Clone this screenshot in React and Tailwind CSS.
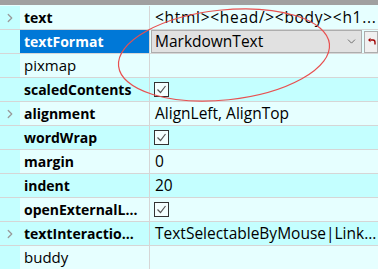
import { ChevronRight, ChevronDown } from 'lucide-react'

const rows = [
  { name: 'text', bold: true, expand: true, value: '<html><head/><body><h1...', wide: true },
  { name: 'textFormat', bold: true, selected: true, combo: 'MarkdownText' },
  { name: 'pixmap', value: '' },
  { name: 'scaledContents', bold: true, check: true },
  { name: 'alignment', bold: true, expand: true, value: 'AlignLeft, AlignTop' },
  { name: 'wordWrap', bold: true, check: true },
  { name: 'margin', bold: true, value: '0' },
  { name: 'indent', bold: true, value: '20' },
  { name: 'openExternalL...', bold: true, check: true },
  { name: 'textInteractio...', bold: true, expand: true, value: 'TextSelectableByMouse|Link...' },
  { name: 'buddy', value: '' },
]

function Check() {
  return (
    <span className="w-[15px] h-[15px] border border-[#333] bg-[#f4ffff] flex items-center justify-center">
      <svg width="11" height="11" viewBox="0 0 11 11">
        <path d="M1.5 5.5 L4.5 8.5 L9.5 2" fill="none" stroke="#555" strokeWidth="1.2" />
      </svg>
    </span>
  )
}

function Row({ row, i }) {
  const bg = i % 2 === 0 ? 'bg-[#e6ffff]' : 'bg-[#c4ffff]'
  return (
    <div className="flex h-[24px] border-b border-[#d6d6d6]">
      <div className="w-[20px] bg-[#c4ffff] flex items-center justify-center text-[#9a9a9a]">
        {row.expand && <ChevronRight size={14} strokeWidth={2.2} />}
      </div>
      <div
        className={
          'w-[130px] border-r border-[#d6d6d6] pl-[4px] flex items-center whitespace-nowrap overflow-hidden text-[14px] ' +
          (row.selected ? 'bg-[#0078d7] text-white' : bg + ' text-black') +
          (row.bold ? ' font-bold' : ' text-[15px]')
        }
      >
        {row.name}
      </div>
      <div className={'flex-1 flex items-center whitespace-nowrap overflow-hidden text-[15.5px] ' + bg}>
        {row.combo ? (
          <div className="flex items-center h-full w-full bg-[#e6ffff]">
            <div className="h-[23px] w-[214px] ml-[1px] bg-[#e1e1e1] border border-[#adadad] flex items-center pl-[3px] pr-[3px]">
              <span className="flex-1">{row.combo}</span>
              <ChevronDown size={13} className="text-[#555]" strokeWidth={1.5} />
            </div>
            <div className="h-[22px] w-[14px] ml-[2px] bg-[#f0f0f0] border border-[#adadad] flex items-center justify-center">
              <svg width="9" height="9" viewBox="0 0 9 9">
                <path d="M1 3 L3.5 0.8 L3.5 5.2 Z" fill="#a00000" />
                <path d="M3.5 3 H6 Q8 3 8 5.5 V7.5" fill="none" stroke="#a00000" strokeWidth="1.4" />
              </svg>
            </div>
          </div>
        ) : row.check ? (
          <div className="pl-[4px]">
            <Check />
          </div>
        ) : (
          <span className={'pl-[5px]' + (row.wide ? ' tracking-[0.7px]' : '')}>{row.value}</span>
        )}
      </div>
    </div>
  )
}

export default function App() {
  return (
    <div
      className="relative w-[378px] h-[269px] overflow-hidden bg-[#e6ffff] text-black"
      style={{ fontFamily: '"Open Sans", "Noto Sans", sans-serif' }}
    >
      <div className="h-[5px] bg-[#a0a0a0]" />
      <div className="h-[1px] bg-[#e6ffff]" />
      {rows.map((row, i) => (
        <Row key={row.name} row={row} i={i} />
      ))}
      <svg className="absolute left-0 top-0 pointer-events-none" width="378" height="269">
        <ellipse
          cx="224"
          cy="55"
          rx="106"
          ry="45"
          transform="rotate(-6 224 55)"
          fill="none"
          stroke="#e85050"
          strokeWidth="1.2"
        />
      </svg>
    </div>
  )
}
